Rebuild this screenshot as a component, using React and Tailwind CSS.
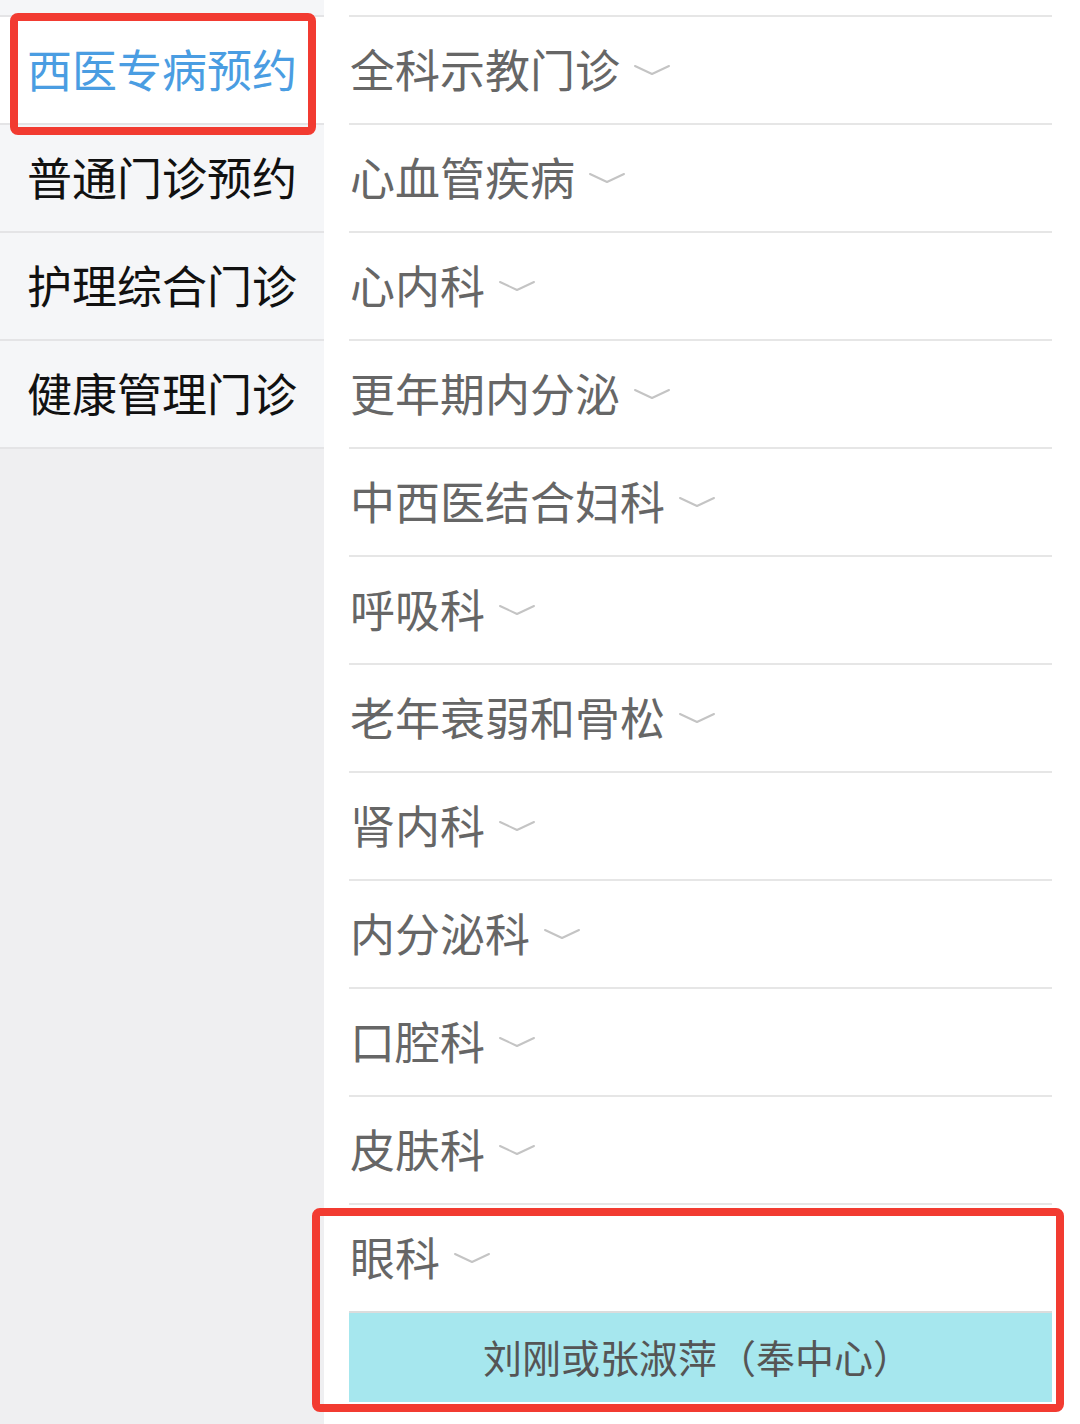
import React from "react";

const left = ["西医专病预约", "普通门诊预约", "护理综合门诊", "健康管理门诊"];
const right = [
  "全科示教门诊",
  "心血管疾病",
  "心内科",
  "更年期内分泌",
  "中西医结合妇科",
  "呼吸科",
  "老年衰弱和骨松",
  "肾内科",
  "内分泌科",
  "口腔科",
  "皮肤科",
  "眼科",
];

function Chevron() {
  return (
    <svg width="36" height="14" viewBox="0 0 36 14" className="ml-[14px] mt-[4px] shrink-0">
      <polyline points="1,3 18,11 35,3" fill="none" stroke="#c4c4c4" strokeWidth="2" strokeLinejoin="round" strokeLinecap="round" />
    </svg>
  );
}

export default function App() {
  return (
    <div
      className="relative w-[1080px] h-[1424px] flex overflow-hidden bg-white"
      style={{ fontFamily: '"Noto Sans CJK SC", "Noto Sans", sans-serif' }}
    >
      {/* Left column */}
      <div className="w-[324px] shrink-0 bg-[#efeff1] flex flex-col">
        <div className="h-[15px] bg-[#f5f6f8]" />
        {left.map((t, i) => (
          <div
            key={t}
            className={`h-[108px] border-t-2 border-[#e4e4e6] flex items-center justify-center pb-[4px] text-[45px] leading-none ${
              i === 0 ? "bg-white text-[#4a9de2]" : "bg-[#f5f6f8] text-[#111111]"
            }`}
          >
            {t}
          </div>
        ))}
        <div className="border-t-2 border-[#e4e4e6]" />
      </div>

      {/* Right column */}
      <div className="flex-1 pl-[25px] pr-[28px] flex flex-col">
        <div className="h-[15px]" />
        {right.map((t) => (
          <div
            key={t}
            className="h-[108px] border-t-2 border-[#e6e6e6] flex items-center pl-[1px] pb-[4px] text-[45px] leading-none text-[#666666]"
          >
            <span>{t}</span>
            <Chevron />
          </div>
        ))}
        <div className="h-[91px] border-t-2 border-[#dcdcdc] bg-[#a6e7ee] flex items-center justify-center pr-[6px] pb-[2px] text-[39px] leading-none text-[#555555]">
          刘刚或张淑萍（奉中心）
        </div>
      </div>

      {/* Highlight boxes */}
      <div className="absolute left-[10px] top-[13px] w-[306px] h-[122px] border-[8px] border-[#f23b31] rounded-[8px] pointer-events-none" />
      <div className="absolute left-[312px] top-[1208px] w-[752px] h-[204px] border-[8px] border-[#f23b31] rounded-[8px] pointer-events-none" />
    </div>
  );
}
